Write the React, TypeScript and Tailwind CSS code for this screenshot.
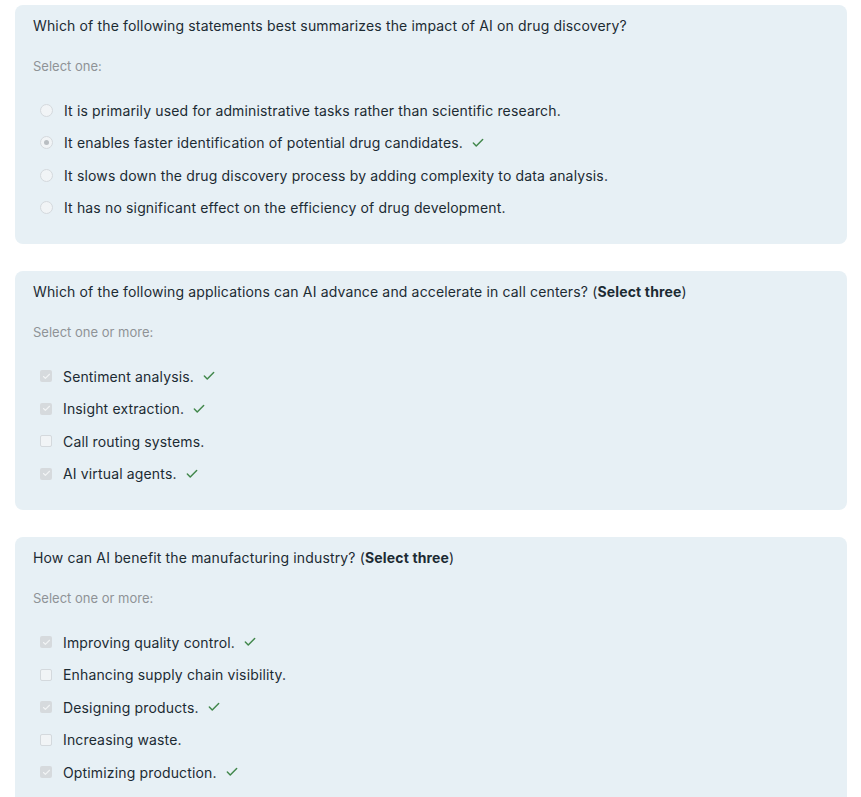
import { Check } from 'lucide-react'

interface Option {
  text: string
  checked?: boolean
}

interface Question {
  prompt: string
  bold?: string
  hint: string
  kind: 'radio' | 'checkbox'
  options: Option[]
}

const questions: Question[] = [
  {
    prompt: 'Which of the following statements best summarizes the impact of AI on drug discovery?',
    hint: 'Select one:',
    kind: 'radio',
    options: [
      { text: 'It is primarily used for administrative tasks rather than scientific research.' },
      { text: 'It enables faster identification of potential drug candidates.', checked: true },
      { text: 'It slows down the drug discovery process by adding complexity to data analysis.' },
      { text: 'It has no significant effect on the efficiency of drug development.' },
    ],
  },
  {
    prompt: 'Which of the following applications can AI advance and accelerate in call centers?',
    bold: 'Select three',
    hint: 'Select one or more:',
    kind: 'checkbox',
    options: [
      { text: 'Sentiment analysis.', checked: true },
      { text: 'Insight extraction.', checked: true },
      { text: 'Call routing systems.' },
      { text: 'AI virtual agents.', checked: true },
    ],
  },
  {
    prompt: 'How can AI benefit the manufacturing industry?',
    bold: 'Select three',
    hint: 'Select one or more:',
    kind: 'checkbox',
    options: [
      { text: 'Improving quality control.', checked: true },
      { text: 'Enhancing supply chain visibility.' },
      { text: 'Designing products.', checked: true },
      { text: 'Increasing waste.' },
      { text: 'Optimizing production.', checked: true },
    ],
  },
]

function Radio({ checked }: { checked?: boolean }) {
  return (
    <span className="w-[13px] h-[13px] rounded-full border border-[#d4d9dd] bg-[#f1f4f6] flex items-center justify-center">
      {checked && <span className="w-[5px] h-[5px] rounded-full bg-[#b9bec2]" />}
    </span>
  )
}

function Box({ checked }: { checked?: boolean }) {
  return (
    <span
      className={
        checked
          ? 'w-[12px] h-[12px] rounded-[2px] bg-[#d6dadd] flex items-center justify-center'
          : 'w-[12px] h-[12px] rounded-[2px] border border-[#d4d9dd] bg-[#f1f4f6]'
      }
    >
      {checked && <Check className="w-[9px] h-[9px] text-[#f2f4f5]" strokeWidth={3} />}
    </span>
  )
}

function Card({ q }: { q: Question }) {
  return (
    <section className="w-full rounded-[8px] bg-[#e7f0f5] pl-[18px] pr-4 pt-[11px] pb-[20px]">
      <p className="text-[14px] leading-[20px] tracking-[0.15px] text-[#1c2b33]">
        {q.prompt}
        {q.bold && (
          <>
            {' ('}
            <b className="font-bold">{q.bold}</b>
            {')'}
          </>
        )}
      </p>
      <p className="mt-[20px] text-[13px] leading-[20px] text-[#8f9397]">{q.hint}</p>
      <div className="mt-[18px] flex flex-col">
        {q.options.map((o) => (
          <div key={o.text} className="h-[32.5px] flex items-center pl-[7px] gap-[11px]">
            {q.kind === 'radio' ? <Radio checked={o.checked} /> : <Box checked={o.checked} />}
            <span className="text-[14px] tracking-[0.15px] text-[#1c2b33]">{o.text}</span>
            {o.checked && <Check className="w-[14px] h-[14px] -ml-[3px] text-[#41874b]" strokeWidth={2.5} />}
          </div>
        ))}
      </div>
    </section>
  )
}

export default function App() {
  return (
    <div
      className="min-h-screen bg-white pt-[5px] pl-[15px] pr-[14px] flex flex-col gap-[27px]"
      style={{ fontFamily: 'Inter, "Noto Sans", sans-serif' }}
    >
      {questions.map((q) => (
        <Card key={q.prompt} q={q} />
      ))}
    </div>
  )
}
